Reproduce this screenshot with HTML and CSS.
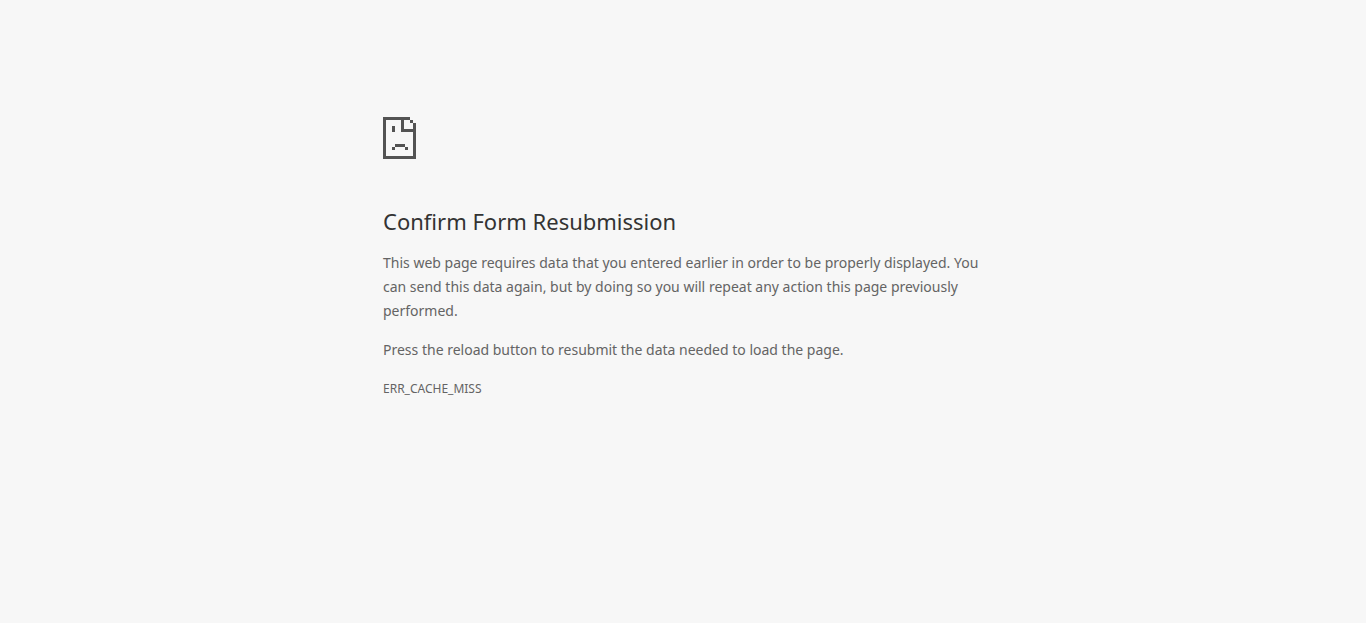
FILE: index.html
```html
<!DOCTYPE html>
<html lang="en">
<head>
<meta charset="utf-8">
<meta name="viewport" content="width=device-width, initial-scale=1">
<title>Confirm Form Resubmission</title>
<link rel="stylesheet" href="styles.css">
</head>
<body>
<main class="error-page">
  <svg class="error-icon" viewBox="0 0 33 42" aria-hidden="true" shape-rendering="crispEdges" fill="currentColor">
    <path fill-rule="evenodd" d="M0 0H27V3H30V6H33V42H0ZM3 3V39H30V15H18V3ZM21 3V12H30V6H27V3Z"/>
    <path d="M9 9h3v6H9zM12 27h10v3H12zM9 30h3v3H9zM22 30h3v3h-3z"/>
  </svg>
  <h1 class="error-title">Confirm Form Resubmission</h1>
  <p class="error-text">This web page requires data that you entered earlier in order to be properly displayed. You can send this data again, but by doing so you will repeat any action this page previously performed.</p>
  <p class="error-text">Press the reload button to resubmit the data needed to load the page.</p>
  <div class="error-code">ERR_CACHE_MISS</div>
</main>
</body>
</html>
```
FILE: styles.css
```css
body {
  margin: 0;
  background: #f7f7f7;
  color: #646464;
  font-family: "Segoe UI", "Noto Sans", sans-serif;
  font-size: 14px;
  line-height: 24px;
}

.error-page {
  box-sizing: border-box;
  max-width: 600px;
  margin: 0 auto;
  padding-top: 117px;
}

.error-icon {
  display: block;
  width: 33px;
  height: 42px;
  margin-bottom: 47px;
  color: #535353;
}

.error-title {
  margin: 0 0 15px;
  color: #333;
  font-size: 22px;
  font-weight: 400;
  line-height: 30px;
}

.error-text {
  margin: 0 0 15px;
}

.error-code {
  font-size: 12px;
}
```
